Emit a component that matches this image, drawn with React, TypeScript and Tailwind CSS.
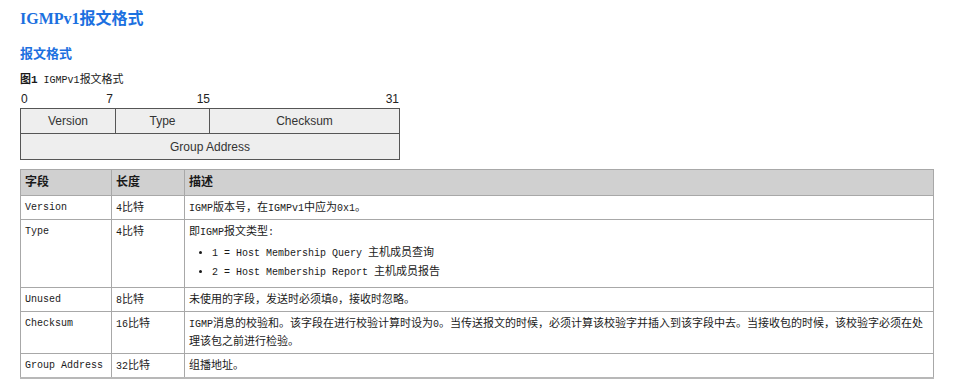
import React from 'react';

const cjk = '"Liberation Mono", "Noto Sans CJK SC", monospace';

// ASCII runs get the narrower monospace size, CJK stays at 11px
function Mixed({ text }: { text: string }) {
  const parts = text.split(/([\x20-\x7e]+)/).filter((p) => p.length > 0);
  return (
    <>
      {parts.map((p, i) =>
        /^[\x20-\x7e]+$/.test(p) ? (
          <span key={i} className="text-[10px] leading-[10px]">
            {p}
          </span>
        ) : (
          <span key={i}>{p}</span>
        )
      )}
    </>
  );
}

const rows = [
  { field: 'Version', len: '4比特', desc: 'IGMP版本号，在IGMPv1中应为0x1。' },
  { field: 'Type', len: '4比特', desc: null },
  { field: 'Unused', len: '8比特', desc: '未使用的字段，发送时必须填0，接收时忽略。' },
  { field: 'Checksum', len: '16比特', desc: null },
  { field: 'Group Address', len: '32比特', desc: '组播地址。' },
];

export default function App() {
  return (
    <div className="w-[954px] h-[388px] bg-white px-[20px] text-[#1a1a1a]">
      <h1
        className="pt-[7px] text-[16px] leading-[24px] font-bold text-[#1c70e0]"
        style={{ fontFamily: '"Liberation Serif", "Noto Sans CJK SC", serif' }}
      >
        IGMPv1报文格式
      </h1>
      <h2
        className="mt-[12px] text-[13px] leading-[20px] font-bold text-[#1c70e0]"
        style={{ fontFamily: '"Noto Sans CJK SC", sans-serif' }}
      >
        报文格式
      </h2>
      <p className="mt-[9px] text-[11px] leading-[16px]" style={{ fontFamily: cjk }}>
        <span className="font-bold">图1</span>
        <span className="ml-[6px]">
          <Mixed text="IGMPv1报文格式" />
        </span>
      </p>

      {/* bit diagram */}
      <div style={{ fontFamily: '"Liberation Sans", Arial, sans-serif' }}>
        <div className="mt-[4px] flex w-[380px] text-[12px] leading-[14px] text-[#222]">
          <div className="w-[96px] flex justify-between pl-[1px] pr-[3px]">
            <span>0</span>
            <span>7</span>
          </div>
          <div className="w-[94px] flex justify-end">
            <span>15</span>
          </div>
          <div className="flex-1 flex justify-end pr-[1px]">
            <span>31</span>
          </div>
        </div>
        <div className="mt-[2px] w-[380px] border border-[#555] bg-[#eeeeee] text-[12px] text-[#333]">
          <div className="flex h-[25px] border-b border-[#555]">
            <div className="w-[95px] border-r border-[#555] flex items-center justify-center">Version</div>
            <div className="w-[94px] border-r border-[#555] flex items-center justify-center">Type</div>
            <div className="flex-1 flex items-center justify-center">Checksum</div>
          </div>
          <div className="flex h-[25px] items-center justify-center">Group Address</div>
        </div>
      </div>

      {/* field table */}
      <table
        className="mt-[9px] w-[914px] table-fixed border-collapse border border-b-2 border-[#a8a8a8] border-b-[#b8b8b8] text-[11px]"
        style={{ fontFamily: cjk }}
      >
        <colgroup>
          <col className="w-[91px]" />
          <col className="w-[73px]" />
          <col />
        </colgroup>
        <thead>
          <tr className="h-[26px] bg-[#d0d0d0] text-[12px] font-bold">
            <th className="border border-[#a8a8a8] pl-[4px] text-left font-bold">字段</th>
            <th className="border border-[#a8a8a8] pl-[4px] text-left font-bold">长度</th>
            <th className="border border-[#a8a8a8] pl-[4px] text-left font-bold">描述</th>
          </tr>
        </thead>
        <tbody>
          {rows.map((r) => (
            <tr key={r.field}>
              <td className="border border-[#a8a8a8] pl-[4px] pt-[3px] pb-[2px] align-top text-[10px] leading-[18px]">
                {r.field}
              </td>
              <td className="border border-[#a8a8a8] pl-[4px] pt-[3px] pb-[2px] align-top leading-[18px]">
                <Mixed text={r.len} />
              </td>
              <td className="border border-[#a8a8a8] pl-[4px] pr-[4px] pt-[3px] pb-[2px] align-top leading-[18px]">
                {r.field === 'Type' ? (
                  <div className="pb-[3px]">
                    <div>
                      <Mixed text="即IGMP报文类型:" />
                    </div>
                    <ul className="mt-[3px] list-disc pl-[23px] leading-[19px]">
                      <li>
                        <Mixed text="1 = Host Membership Query 主机成员查询" />
                      </li>
                      <li>
                        <Mixed text="2 = Host Membership Report 主机成员报告" />
                      </li>
                    </ul>
                  </div>
                ) : r.field === 'Checksum' ? (
                  <>
                    <Mixed text="IGMP消息的校验和。该字段在进行校验计算时设为0。当传送报文的时候，必须计算该校验字并插入到该字段中去。当接收包的时候，该校验字必须在处" />
                    <br />
                    <Mixed text="理该包之前进行检验。" />
                  </>
                ) : (
                  <Mixed text={r.desc ?? ''} />
                )}
              </td>
            </tr>
          ))}
        </tbody>
      </table>
    </div>
  );
}
